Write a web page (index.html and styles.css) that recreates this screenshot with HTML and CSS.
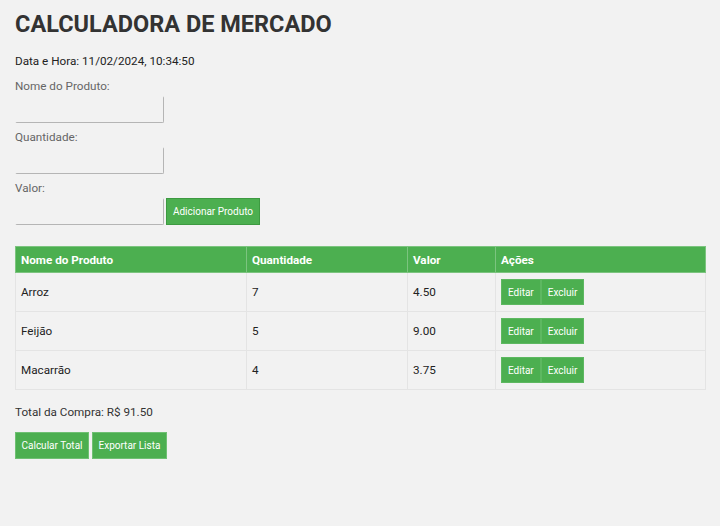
FILE: index.html
```html
<!DOCTYPE html>
<html lang="pt">
<head>
<meta charset="utf-8">
<title>Calculadora de Mercado</title>
<link rel="stylesheet" href="styles.css">
</head>
<body>
<div class="page">
  <h1 class="title">CALCULADORA DE MERCADO</h1>
  <p class="datetime">Data e Hora: 11/02/2024, 10:34:50</p>
  <div class="form">
    <label class="label">Nome do Produto:</label>
    <div class="row"><input class="input" type="text"></div>
    <label class="label">Quantidade:</label>
    <div class="row"><input class="input" type="text"></div>
    <label class="label">Valor:</label>
    <div class="row"><input class="input" type="text"><button class="btn btn-add">Adicionar Produto</button></div>
  </div>
  <table class="table">
    <thead>
      <tr><th class="c1">Nome do Produto</th><th class="c2">Quantidade</th><th class="c3">Valor</th><th>Ações</th></tr>
    </thead>
    <tbody>
      <tr><td>Arroz</td><td>7</td><td>4.50</td><td><div class="actions"><button class="btn btn-sm">Editar</button><button class="btn btn-sm">Excluir</button></div></td></tr>
      <tr><td>Feijão</td><td>5</td><td>9.00</td><td><div class="actions"><button class="btn btn-sm">Editar</button><button class="btn btn-sm">Excluir</button></div></td></tr>
      <tr><td>Macarrão</td><td>4</td><td>3.75</td><td><div class="actions"><button class="btn btn-sm">Editar</button><button class="btn btn-sm">Excluir</button></div></td></tr>
    </tbody>
  </table>
  <p class="total">Total da Compra: R$ 91.50</p>
  <div class="bottom">
    <button class="btn btn-bottom">Calcular Total</button>
    <button class="btn btn-bottom">Exportar Lista</button>
  </div>
</div>
</body>
</html>
```
FILE: styles.css
```css
html, body {
  margin: 0;
  padding: 0;
  background: #f2f2f2;
  font-family: Roboto, "Liberation Sans", sans-serif;
}
.page {
  padding: 10px 14px 0 15px;
}
.title {
  margin: 0;
  font-size: 23.5px;
  font-weight: 700;
  color: #333;
  line-height: 28px;
}
.datetime {
  margin: 16px 0 0;
  font-size: 11.7px;
  color: #222;
  line-height: 14px;
}
.form {
  display: flex;
  flex-direction: column;
  margin-top: 12px;
}
.label {
  font-size: 11.7px;
  color: #666;
  line-height: 13px;
  height: 13px;
  margin-bottom: 3px;
}
.row {
  display: flex;
  align-items: flex-end;
  gap: 2px;
  margin-bottom: 8px;
}
.input {
  box-sizing: border-box;
  width: 149px;
  height: 27px;
  margin: 0;
  padding: 0;
  background: #f2f2f2;
  border: 1px solid #b5b5b5;
  border-top-color: #f2f2f2;
  border-left-color: #f2f2f2;
  border-radius: 2px;
}
.btn {
  font-family: Roboto, "Liberation Sans", sans-serif;
  background: #4caf50;
  color: #fff;
  border: 1px solid #6fc073;
  margin: 0;
  cursor: pointer;
}
.btn-add {
  height: 27px;
  width: 94px;
  font-size: 10px;
  padding: 0;
  border-color: #3d9a41;
}
.table {
  width: 691px;
  margin-top: 13px;
  border-collapse: collapse;
  font-size: 11.7px;
}
.table th {
  background: #4caf50;
  color: #fff;
  font-weight: 700;
  text-align: left;
  height: 26px;
  padding: 0 5px;
  border: 1px solid #7cc47f;
  box-sizing: border-box;
}
.table td {
  color: #222;
  height: 38px;
  padding: 0 5px;
  border: 1px solid #e4e4e4;
}
.c1 { width: 231px; }
.c2 { width: 161px; }
.c3 { width: 88px; }
.actions {
  display: flex;
}
.btn-sm {
  height: 26px;
  font-size: 10px;
  padding: 0 6px;
  border-color: #5db861;
}
.total {
  margin: 15px 0 0;
  font-size: 11.7px;
  color: #333;
  line-height: 14px;
}
.bottom {
  display: flex;
  gap: 3px;
  margin-top: 13px;
}
.btn-bottom {
  height: 27px;
  font-size: 10px;
  padding: 0 5.5px;
}
```
